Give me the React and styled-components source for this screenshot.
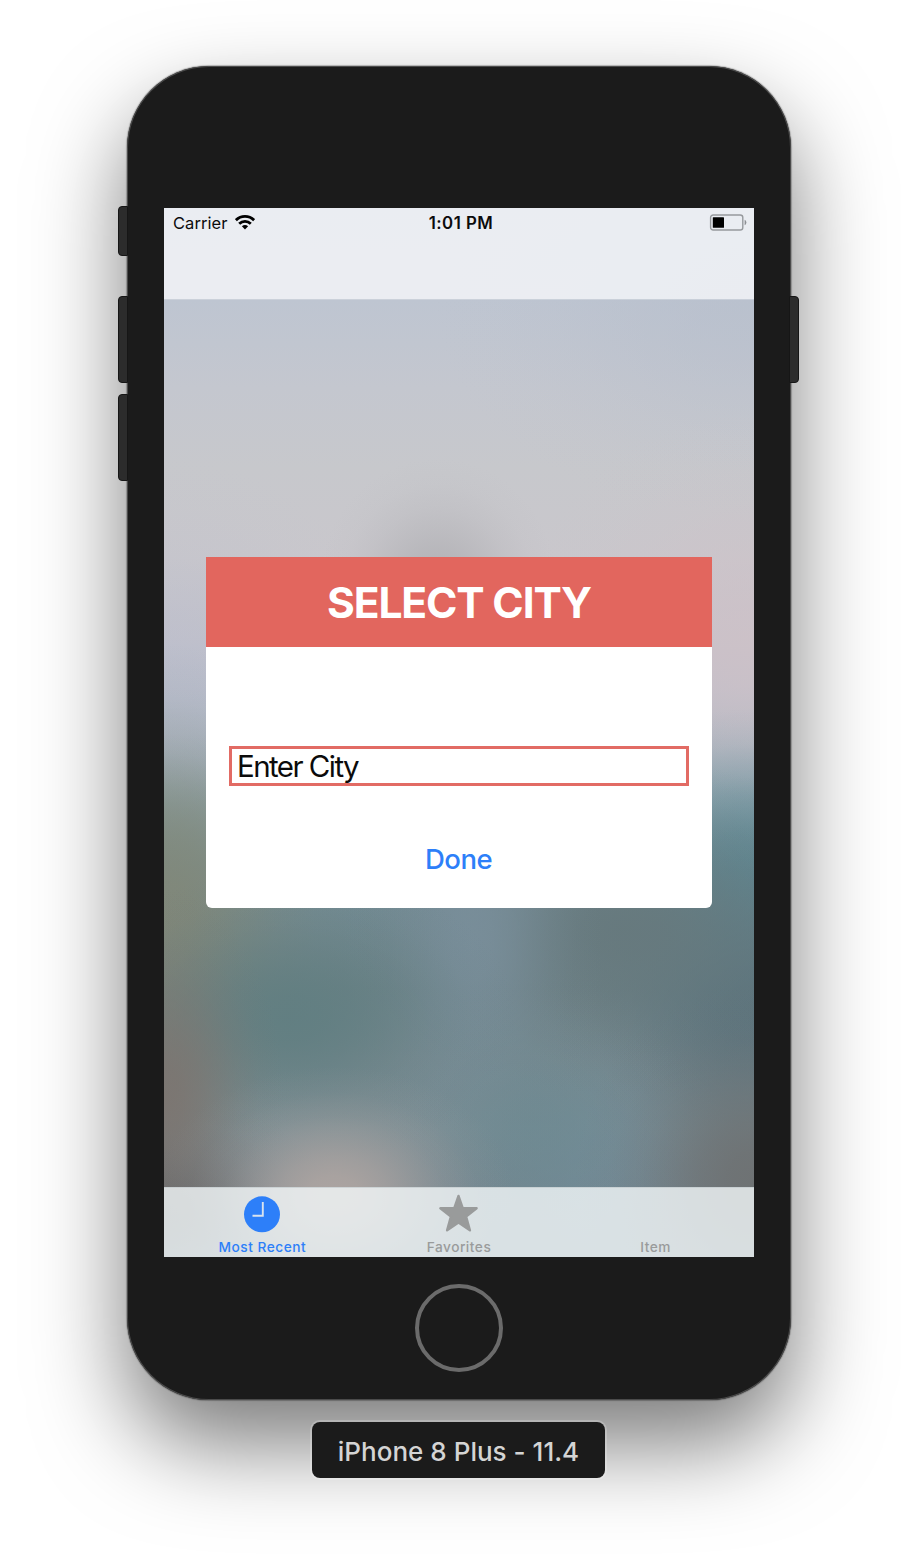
import React from "react";
import styled, { createGlobalStyle } from "styled-components";

const GlobalStyle = createGlobalStyle`
  * { box-sizing: border-box; }
  body {
    margin: 0;
    background: #fff;
    font-family: Inter, "Liberation Sans", sans-serif;
  }
`;

// A soft blob of colour whose opacity eases out towards its edge.
const glow = (rx, ry, x, y, rgb, alpha = 1) =>
  `radial-gradient(ellipse ${rx}px ${ry}px at ${x}px ${y}px, ` +
  [[1, 0], [0.93, 15], [0.75, 30], [0.5, 46], [0.26, 62], [0.08, 80], [0, 100]]
    .map(([k, stop]) => `rgba(${rgb}, ${(alpha * k).toFixed(3)}) ${stop}%`)
    .join(", ") +
  ")";

const wallpaper = [
  glow(180, 130, 170, 988, "172, 164, 161"),
  glow(120, 210, 0, 890, "124, 116, 111", 0.9),
  glow(170, 110, 0, 1000, "96, 101, 104"),
  glow(180, 200, 590, 975, "110, 113, 114", 0.95),
  glow(160, 160, 370, 920, "106, 136, 144", 0.6),
  glow(130, 130, 440, 950, "116, 142, 156", 0.6),
  glow(230, 150, 125, 810, "96, 126, 129", 0.9),
  glow(190, 280, 0, 715, "129, 135, 120", 0.95),
  glow(130, 260, 308, 735, "123, 144, 157", 0.8),
  glow(280, 170, 460, 720, "102, 120, 124", 0.9),
  glow(200, 190, 590, 805, "90, 114, 124", 0.9),
  glow(200, 180, 590, 680, "94, 137, 148", 0.95),
  glow(200, 110, 0, 635, "126, 147, 140", 0.5),
  glow(240, 240, 0, 490, "181, 188, 206", 0.5),
  glow(120, 130, 274, 380, "176, 176, 180", 0.9),
  glow(240, 240, 590, 440, "207, 193, 199", 0.7),
  glow(320, 210, 590, 100, "181, 189, 203", 0.5),
  `linear-gradient(#bcc5d1 0, #bec5d1 91px, #c4c7cf 180px, #c7c8cc 260px, #c9c7cc 350px,
    #c5c2ca 430px, #bcbeca 480px, #acb6c2 525px, #8da4ae 590px, #748e97 660px,
    #6f8388 780px, #78898f 850px, #7a8d94 920px, #758791 979px, #758892 1049px)`,
].join(", ");

const Page = styled.main`
  width: 918px;
  height: 1562px;
  padding-top: 66px;
  display: flex;
  flex-direction: column;
  align-items: center;
  overflow: hidden;
`;

const Phone = styled.section`
  position: relative;
  width: 664px;
  height: 1334px;
  padding-top: 142px;
  border-radius: 82px;
  background: #1b1b1b;
  box-shadow: inset 0 0 0 1px #4b4b4b, 0 0 1px 1px rgba(0, 0, 0, 0.25),
    0 44px 92px rgba(0, 0, 0, 0.52);
  display: flex;
  flex-direction: column;
  align-items: center;
`;

const SideButton = styled.span`
  position: absolute;
  top: ${(p) => p.$top}px;
  ${(p) => (p.$side === "left" ? "left: -9px" : "right: -8px")};
  width: 10px;
  height: ${(p) => p.$height}px;
  border: 1px solid #161616;
  border-radius: ${(p) => (p.$side === "left" ? "4px 0 0 4px" : "0 4px 4px 0")};
  background: #2c2c2c;
`;

const Screen = styled.div`
  width: 590px;
  height: 1049px;
  display: flex;
  flex-direction: column;
  background: ${wallpaper};
`;

const NavBar = styled.header`
  height: 92px;
  padding: 3px 7px 0 9px;
  border-bottom: 1px solid rgba(215, 221, 228, 0.5);
  background: rgba(247, 248, 251, 0.78);
  background-clip: padding-box;
`;

const StatusBar = styled.div`
  height: 24px;
  display: grid;
  grid-template-columns: 1fr auto 1fr;
  align-items: center;
  color: #0b0b0c;
  font-size: 16.5px;
  line-height: 24px;
`;

const Carrier = styled.span`
  display: flex;
  align-items: center;
  gap: 8px;
  letter-spacing: 0.05px;
`;

const Time = styled.time`
  padding-left: 2px;
  font-size: 16.8px;
  font-weight: 600;
  letter-spacing: 0.5px;
`;

const BatterySlot = styled.span`
  display: flex;
  justify-content: flex-end;
  padding-bottom: 2px;
`;

const Content = styled.div`
  flex: 1;
  display: flex;
  flex-direction: column;
  align-items: center;
  padding-top: 257px;
`;

const Dialog = styled.form`
  width: 506px;
  height: 351px;
  display: flex;
  flex-direction: column;
  align-items: center;
  border-radius: 0 0 6px 6px;
  overflow: hidden;
  background: #fff;
`;

const DialogTitle = styled.h1`
  margin: 0;
  width: 100%;
  height: 90px;
  background: #e2665e;
  color: #fff;
  text-align: center;
  font-size: 42.5px;
  font-weight: 700;
  line-height: 91px;
  letter-spacing: -1.15px;
`;

const CityField = styled.div`
  width: 460px;
  height: 40px;
  margin-top: 99px;
  padding-left: 5px;
  border: 3px solid #e26b64;
  color: #0b0b0b;
  font-size: 29.5px;
  line-height: 35px;
  letter-spacing: -1.55px;
  white-space: nowrap;
`;

const DoneButton = styled.button`
  margin: 52px 1px 0 0;
  padding: 0;
  border: 0;
  background: none;
  color: #2d7ff9;
  font: 500 27.5px/42px Inter, "Liberation Sans", sans-serif;
  letter-spacing: -0.5px;
`;

const TabBar = styled.nav`
  height: 70px;
  display: grid;
  grid-template-columns: repeat(3, 1fr);
  border-top: 1px solid rgba(190, 198, 202, 0.6);
  background: rgba(242, 248, 249, 0.8);
`;

const Tab = styled.div`
  display: flex;
  flex-direction: column;
  align-items: center;
  padding-top: 6px;
  color: ${(p) => (p.$active ? "#2d7ff9" : "#999b9b")};
  font-size: 13.7px;
  font-weight: 550;
  line-height: 18px;
  letter-spacing: 0.5px;
`;

const TabIcon = styled.span`
  height: 44px;
  display: flex;
  align-items: flex-start;
`;

const HomeButton = styled.span`
  width: 88px;
  height: 88px;
  margin: 27px 1px 0 0;
  border: 4px solid #6b6b6b;
  border-radius: 50%;
`;

const DeviceLabel = styled.p`
  position: relative;
  width: 293px;
  height: 56px;
  margin: 22px 1px 0 0;
  border-radius: 8px;
  background: #1b1b1b;
  box-shadow: 0 0 0 2px rgba(255, 255, 255, 0.2);
  color: #d4d4d4;
  text-align: center;
  font-size: 26px;
  font-weight: 500;
  line-height: 60px;
  letter-spacing: 0.02px;
`;

const WifiIcon = () => (
  <svg width="20" height="17" viewBox="0 0 20 17">
    <g fill="none" stroke="#000" strokeWidth="2.8">
      <path d="M0.9 5.2C6 0.2 14 0.2 19.1 5.2" />
      <path d="M4.2 8.7C7.5 5.5 12.5 5.5 15.8 8.7" />
    </g>
    <path d="M6.9 11.3C8.7 9.7 11.3 9.7 13.1 11.3L10 14.5Z" fill="#000" />
  </svg>
);

const BatteryIcon = () => (
  <svg width="38" height="17" viewBox="0 0 38 17">
    <rect x="1.6" y="1" width="32.2" height="15" rx="2.6" fill="none" stroke="#96999d" strokeWidth="1.4" />
    <rect x="3.8" y="3.2" width="11.2" height="10.6" rx="0.6" fill="#000" />
    <path d="M35.6 5.8Q37.4 6.4 37.4 8.5T35.6 11.2Z" fill="#8d9094" />
  </svg>
);

const ClockIcon = () => (
  <svg width="36" height="39" viewBox="0 0 36 39">
    <circle cx="18" cy="20.3" r="18" fill="#2d7ff9" />
    <path d="M18.8 8V21.7H8.5" fill="none" stroke="#d9e3ee" strokeWidth="1.9" />
  </svg>
);

const StarIcon = () => (
  <svg width="40" height="39" viewBox="0 0 40 39">
    <path
      d="M19.5 2L23.8 14.3H37.6L27.1 22.5L30.9 36.3L19.5 28.4L8.1 36.3L11.9 22.5L1.4 14.3H15.2Z"
      fill="#999b9b"
      stroke="#999b9b"
      strokeWidth="2.4"
      strokeLinejoin="round"
    />
  </svg>
);

const tabs = [
  { label: "Most Recent", icon: <ClockIcon />, active: true },
  { label: "Favorites", icon: <StarIcon /> },
  { label: "Item" },
];

export default function App() {
  return (
    <>
      <GlobalStyle />
      <Page>
        <Phone>
          <SideButton $side="left" $top={140} $height={50} />
          <SideButton $side="left" $top={230} $height={87} />
          <SideButton $side="left" $top={328} $height={87} />
          <SideButton $side="right" $top={230} $height={87} />
          <Screen>
            <NavBar>
              <StatusBar>
                <Carrier>
                  Carrier <WifiIcon />
                </Carrier>
                <Time>1:01 PM</Time>
                <BatterySlot>
                  <BatteryIcon />
                </BatterySlot>
              </StatusBar>
            </NavBar>
            <Content>
              <Dialog>
                <DialogTitle>SELECT CITY</DialogTitle>
                <CityField>Enter City</CityField>
                <DoneButton type="button">Done</DoneButton>
              </Dialog>
            </Content>
            <TabBar>
              {tabs.map((tab) => (
                <Tab key={tab.label} $active={tab.active}>
                  <TabIcon>{tab.icon}</TabIcon>
                  {tab.label}
                </Tab>
              ))}
            </TabBar>
          </Screen>
          <HomeButton />
        </Phone>
        <DeviceLabel>iPhone 8 Plus - 11.4</DeviceLabel>
      </Page>
    </>
  );
}
